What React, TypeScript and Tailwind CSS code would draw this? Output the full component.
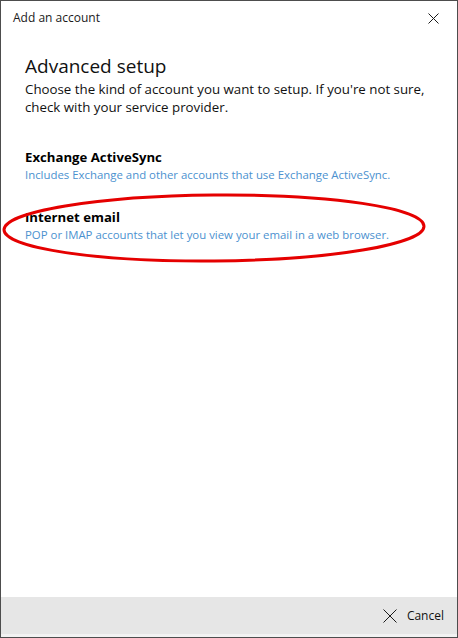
const font = { fontFamily: '"Open Sans", "Noto Sans", sans-serif' }

function CloseGlyph({ size, className }: { size: number; className?: string }) {
  return (
    <svg width={size} height={size} viewBox={`0 0 ${size} ${size}`} className={className}>
      <path d={`M0.5 0.5 L${size - 0.5} ${size - 0.5} M${size - 0.5} 0.5 L0.5 ${size - 0.5}`} stroke="#1a1a1a" strokeWidth="1" fill="none" />
    </svg>
  )
}

export default function App() {
  return (
    <div
      className="h-[638px] w-[458px] flex flex-col border border-[#4d4d4d] bg-white text-black relative"
      style={font}
    >
      {/* Title bar */}
      <div className="h-[34px] flex items-center justify-between pl-3 pr-[18px]">
        <span className="text-[12px] text-[#1a1a1a]">Add an account</span>
        <CloseGlyph size={11} />
      </div>

      {/* Body */}
      <div className="flex-1 px-6 pt-[18px]">
        <h1 className="text-[19px] leading-[26px] font-normal text-[#111]">Advanced setup</h1>
        <p className="text-[13.3px] leading-[18px] text-[#111] mt-[1px]">
          Choose the kind of account you want to setup. If you're not sure, check with your service provider.
        </p>

        <div className="mt-[33px]">
          <p className="text-[13.2px] leading-[17px] font-bold">Exchange ActiveSync</p>
          <p className="text-[11.4px] leading-[17px] text-[#4b91cf]">
            Includes Exchange and other accounts that use Exchange ActiveSync.
          </p>
        </div>

        <div className="mt-[26px]">
          <p className="text-[13.2px] leading-[17px] font-bold">Internet email</p>
          <p className="text-[11.4px] leading-[17px] text-[#4b91cf]">
            POP or IMAP accounts that let you view your email in a web browser.
          </p>
        </div>
      </div>

      {/* Footer */}
      <div className="h-[40px] bg-[#e6e6e6] border-b-[3px] border-[#f2f2f2] flex items-center justify-end pr-[13px] gap-[10px]">
        <CloseGlyph size={14} />
        <span className="text-[12px] text-[#111]">Cancel</span>
      </div>

      {/* Red annotation */}
      <svg className="absolute left-0 top-0 pointer-events-none" width="458" height="638">
        <ellipse cx="213" cy="227" rx="210" ry="33" fill="none" stroke="#e50000" strokeWidth="3" transform="rotate(-0.5 213 227)" />
      </svg>
    </div>
  )
}
